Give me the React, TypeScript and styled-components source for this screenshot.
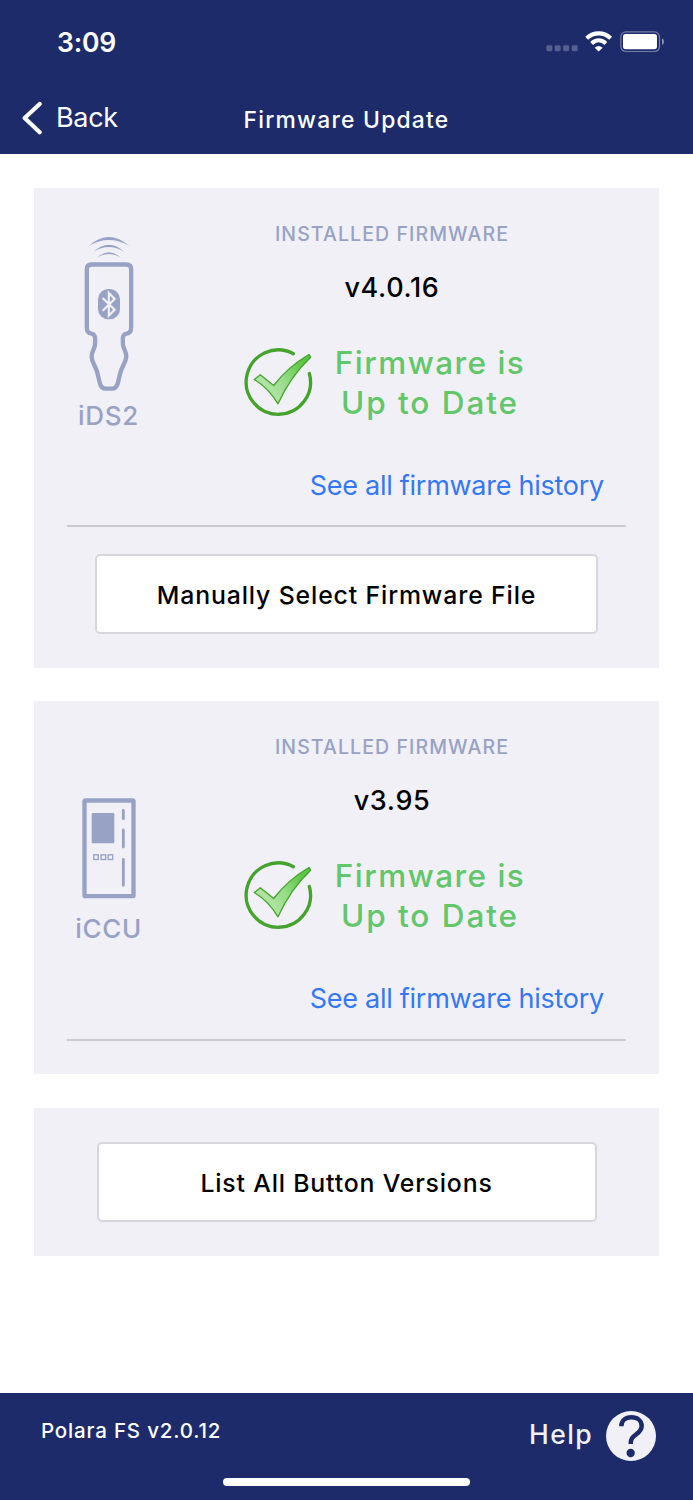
import React from "react";
import styled, { createGlobalStyle } from "styled-components";

const navy = "#1d2b6b";
const panel = "#f1f0f6";
const muted = "#97a2c5";

const GlobalStyle = createGlobalStyle`
  *, *::before, *::after { box-sizing: border-box; }
  body {
    margin: 0;
    background: #fff;
    font-family: Inter, "Liberation Sans", sans-serif;
  }
  svg { display: block; flex: none; }
`;

const Screen = styled.div`
  display: flex;
  flex-direction: column;
  width: 693px;
  height: 1500px;
  overflow: hidden;
  background: #fff;
`;

const Text = styled.span<{ $size: number; $weight?: number; $track?: number; $line: number; $color?: string }>`
  display: block;
  white-space: nowrap;
  font-size: ${(p) => p.$size}px;
  font-weight: ${(p) => p.$weight ?? 500};
  letter-spacing: ${(p) => p.$track ?? 0}px;
  line-height: ${(p) => p.$line}px;
  color: ${(p) => p.$color ?? "#000"};
`;

const Header = styled.header`
  height: 153.7px;
  flex: none;
  background: ${navy};
`;

const StatusBar = styled.div`
  display: flex;
  justify-content: space-between;
  height: 84px;
  padding: 30px 28px 0 57px;
`;

const NavBar = styled.nav`
  display: grid;
  grid-template-columns: 1fr auto 1fr;
  align-items: center;
  height: 68px;
  padding: 0 22px;
`;

const BackButton = styled.button`
  display: flex;
  align-items: center;
  gap: 14px;
  padding: 0;
  border: 0;
  background: none;
  font-family: inherit;
`;

const NavTitle = styled.h1`
  margin: 3px 0 0;
`;

const Content = styled.main`
  display: flex;
  flex: 1;
  flex-direction: column;
  gap: 33.7px;
  padding: 34px 34px 0;
`;

const Card = styled.section<{ $height: number }>`
  display: flex;
  flex-direction: column;
  align-items: center;
  flex: none;
  height: ${(p) => p.$height}px;
  padding: 34px 33px 0;
  background: ${panel};
`;

const CardTop = styled.div`
  display: flex;
  align-items: flex-start;
  align-self: stretch;
  height: 305.5px;
  border-bottom: 2px solid #cbcad0;
`;

const Device = styled.div`
  display: flex;
  flex-direction: column;
  align-items: center;
  justify-content: flex-end;
  width: 83px;
  height: 210px;
`;

const DeviceLabel = styled.div<{ $gap: number }>`
  margin-top: ${(p) => p.$gap}px;
`;

const Details = styled.div`
  display: flex;
  flex: 1;
  flex-direction: column;
  align-items: center;
  padding-left: 8px;
`;

const Version = styled.div`
  margin-top: 21px;
`;

const Status = styled.div`
  display: flex;
  align-items: center;
  align-self: stretch;
  gap: 20px;
  margin-top: 35px;
  padding-left: 86px;
`;

const StatusText = styled.div`
  display: flex;
  flex-direction: column;
  align-items: center;
  width: 192px;
`;

const HistoryLink = styled.a`
  align-self: flex-end;
  margin: 45px 22px 0 0;
`;

const ActionButton = styled.button<{ $width: number; $top: number }>`
  display: flex;
  align-items: center;
  justify-content: center;
  width: ${(p) => p.$width}px;
  height: 80px;
  margin-top: ${(p) => p.$top}px;
  padding: 1px 0 0;
  border: 2px solid #d7d6dc;
  border-radius: 5px;
  background: #fff;
  font-family: inherit;
`;

const Footer = styled.footer`
  display: flex;
  flex-direction: column;
  align-items: center;
  justify-content: space-between;
  flex: none;
  height: 107.5px;
  padding: 18px 37px 14px;
  background: ${navy};
`;

const FooterRow = styled.div`
  display: flex;
  align-items: flex-start;
  justify-content: space-between;
  align-self: stretch;
`;

const HelpButton = styled.button`
  display: flex;
  align-items: flex-start;
  gap: 13px;
  padding: 0;
  border: 0;
  background: none;
  font-family: inherit;
`;

const AppVersion = styled.div`
  padding: 6.5px 0 0 4px;
`;

const HomeIndicator = styled.div`
  width: 247px;
  height: 8.5px;
  border-radius: 5px;
  background: #fff;
`;

const StatusIcons = () => (
  <svg width="120" height="23.33" viewBox="135 90 360 70" fill="none">
    {[139, 164, 189.5, 215].map((x) => (
      <rect key={x} x={x} y="136" width="18" height="17.5" rx="4" fill="#55608f" />
    ))}
    <path d="M260 115C281 95.500 311 95.500 332 115" stroke="#fff" strokeWidth="12.500" />
    <path d="M275 130.500C287 118 305 118 317.500 130.500" stroke="#fff" strokeWidth="12" />
    <path d="M284 143Q296 133 308 143L296 154.500Z" fill="#fff" />
    <rect x="362.500" y="95.500" width="116" height="59" rx="15" stroke="#7780a6" strokeWidth="3.500" />
    <rect x="369" y="102" width="102" height="45.500" rx="8" fill="#fff" />
    <path d="M486 115Q492 118 492 125Q492 132 486 135Z" fill="#8b93b4" />
  </svg>
);

const Chevron = () => (
  <svg width="20" height="34" viewBox="66 301 60 102" fill="none">
    <path d="M119 310L74 352L119 395" stroke="#fff" strokeWidth="12.500" strokeLinecap="round" strokeLinejoin="round" />
  </svg>
);

const ButtonDeviceIcon = () => (
  <svg width="60" height="157" viewBox="57 45 180 471" fill="none">
    <g fill={muted}>
      <path d="M87 77Q147 24 208 78Q147 43 87 77Z" />
      <path d="M101 95Q147 53 193 96Q147 67 101 95Z" />
      <path d="M112 112Q147 82 181 112Q147 92 112 112Z" />
      <rect x="114" y="207" width="66" height="91" rx="31" />
    </g>
    <path
      d="M94 133.500H199Q213.500 133.500 213.500 148V322Q213.500 340 200 341C184 342 189 365 189 374C191 389 199 393 199 410C198 427 187 436 181 458L173 491Q169 506 156 506H137Q124 506 120 491L112 458C106 436 95 427 95 410C95 393 103 389 105 374C105 365 110 342 94 341Q80.500 340 80.500 322V148Q80.500 133.500 94 133.500Z"
      stroke={muted}
      strokeWidth="13"
    />
    <path d="M128 234L164 269L146.500 287V219L164 237L128 272" stroke={panel} strokeWidth="6.500" />
  </svg>
);

const ControlUnitIcon = () => (
  <svg width="54" height="101" viewBox="65 53 162 303" fill="none">
    <rect x="72.500" y="60.500" width="147" height="287" rx="3" stroke={muted} strokeWidth="13" />
    <rect x="94" y="98" width="68" height="91" rx="4" fill={muted} />
    {[100.5, 122.500, 143.500].map((x) => (
      <rect key={x} x={x} y="223.500" width="13.500" height="14" stroke={muted} strokeWidth="4" />
    ))}
    <path d="M189 90V115M189 149V200M189 237V315" stroke={muted} strokeWidth="8.500" strokeLinecap="round" />
  </svg>
);

const CheckIcon = () => (
  <svg width="70" height="70" viewBox="24 22.500 210 210" fill="none">
    <defs>
      <linearGradient id="tick" x1="70" y1="140" x2="200" y2="60" gradientUnits="userSpaceOnUse">
        <stop offset="0.150" stopColor="#aee3a2" />
        <stop offset="0.500" stopColor="#98dc88" />
        <stop offset="0.850" stopColor="#68cb52" />
        <stop offset="1" stopColor="#5cc645" />
      </linearGradient>
    </defs>
    <path d="M172 39.500A96.500 96.500 0 1 0 220 99" stroke="#45a32d" strokeWidth="10" strokeLinecap="round" />
    <path
      d="M55 117L73 103L113 135C142 97 178 66 219 42L224 50C187 85 153 129 126 190C108 160 86 136 55 117Z"
      fill="url(#tick)"
      stroke="#45a32d"
      strokeWidth="4"
      strokeLinejoin="round"
    />
  </svg>
);

const HelpIcon = () => (
  <svg width="50" height="50" viewBox="317 93 150 150" fill="none">
    <circle cx="392" cy="168" r="75" fill={panel} />
    <path
      d="M363 139C363 122 375 112 393 112C411 112 424 122 424 138C424 150 417 156 408 163C396 172 391 176 391 192"
      stroke={navy}
      strokeWidth="13.500"
    />
    <circle cx="391" cy="219" r="12.500" fill={navy} />
  </svg>
);

interface FirmwareProps {
  name: string;
  labelGap: number;
  version: string;
  height: number;
  icon: React.ReactNode;
  children?: React.ReactNode;
}

const FirmwareCard = ({ name, labelGap, version, height, icon, children }: FirmwareProps) => (
  <Card $height={height}>
    <CardTop>
      <Device>
        {icon}
        <DeviceLabel $gap={labelGap}>
          <Text $size={26} $line={32} $track={0.7} $color={muted}>{name}</Text>
        </DeviceLabel>
      </Device>
      <Details>
        <Text $size={19.5} $line={25} $track={1.1} $color={muted}>INSTALLED FIRMWARE</Text>
        <Version>
          <Text $size={27} $line={40} $track={0.65}>{version}</Text>
        </Version>
        <Status>
          <CheckIcon />
          <StatusText>
            <Text $size={31.5} $line={40} $track={1.45} $color="#62c66a">Firmware is</Text>
            <Text $size={31.5} $line={40} $track={1.95} $color="#62c66a">Up to Date</Text>
          </StatusText>
        </Status>
        <HistoryLink>
          <Text $size={27} $line={35} $weight={400} $track={-0.26} $color="#3478f6">See all firmware history</Text>
        </HistoryLink>
      </Details>
    </CardTop>
    {children}
  </Card>
);

export default function App() {
  return (
    <Screen>
      <GlobalStyle />
      <Header>
        <StatusBar>
          <Text $size={26.5} $line={24} $weight={600} $track={-0.2} $color="#fff">3:09</Text>
          <StatusIcons />
        </StatusBar>
        <NavBar>
          <BackButton>
            <Chevron />
            <Text $size={27} $line={34} $weight={400} $track={-0.3} $color="#fff">Back</Text>
          </BackButton>
          <NavTitle>
            <Text $size={22.8} $line={30} $track={1.25} $color="#fff">Firmware Update</Text>
          </NavTitle>
        </NavBar>
      </Header>
      <Content>
        <FirmwareCard name="iDS2" labelGap={7.5} version="v4.0.16" height={480} icon={<ButtonDeviceIcon />}>
          <ActionButton $width={503} $top={27}>
            <Text $size={24.8} $line={32} $track={0.87}>Manually Select Firmware File</Text>
          </ActionButton>
        </FirmwareCard>
        <FirmwareCard name="iCCU" labelGap={14} version="v3.95" height={373} icon={<ControlUnitIcon />} />
        <Card $height={147.5}>
          <ActionButton $width={500} $top={0}>
            <Text $size={24.8} $line={32} $track={0.83}>List All Button Versions</Text>
          </ActionButton>
        </Card>
      </Content>
      <Footer>
        <FooterRow>
          <AppVersion>
            <Text $size={20.5} $line={28} $track={0.82} $color="#fff">Polara FS v2.0.12</Text>
          </AppVersion>
          <HelpButton>
            <Text $size={26.5} $line={46} $track={1.4} $color={panel}>Help</Text>
            <HelpIcon />
          </HelpButton>
        </FooterRow>
        <HomeIndicator />
      </Footer>
    </Screen>
  );
}
